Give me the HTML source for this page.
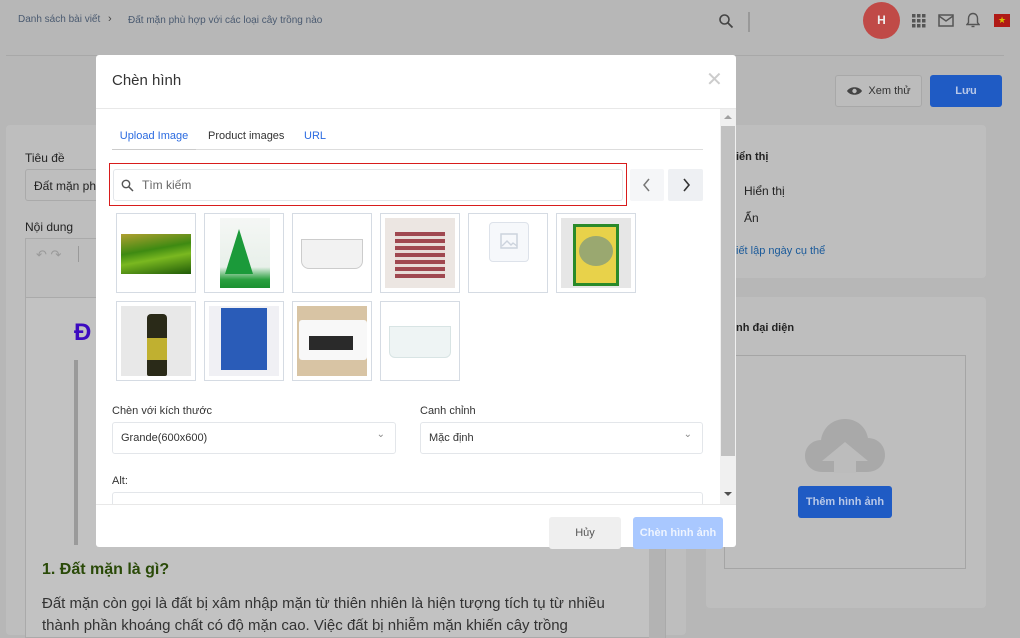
<!DOCTYPE html>
<html><head><meta charset="utf-8"><style>
*{box-sizing:border-box;margin:0;padding:0}
body{width:1020px;height:627px;overflow:hidden;background:#b7b7b7;font-family:"Liberation Sans",sans-serif;position:relative;color:#333}
.a{position:absolute}
.card{position:absolute;background:#bebebe;border-radius:4px}
.tile{position:absolute;width:80px;height:80px;border:1px solid #d5dbe3;background:#fff}
.tile .i{position:absolute;left:4px;top:4px;width:70px;height:70px}
.btn{position:absolute;border-radius:3px;font-size:11px;font-weight:bold;text-align:center;white-space:nowrap}
.sel{position:absolute;height:32px;border:1px solid #e3e6ea;border-radius:3px;font-size:11px;color:#333;padding:9px 8px}
.sel:after{content:"⌄";position:absolute;right:10px;top:6px;color:#888;font-size:10px}
</style></head><body>
<!-- top bar -->
<div class="a" style="left:18px;top:14px;font-size:10px;color:#4a5a70">Danh sách bài viết</div>
<div class="a" style="left:108px;top:13px;font-size:11px;color:#444">›</div>
<div class="a" style="left:128px;top:15px;font-size:10px;color:#4a5a70">Đất mặn phù hợp với các loại cây trồng nào</div>
<svg class="a" style="left:718px;top:13px" width="16" height="16" viewBox="0 0 16 16"><circle cx="6.5" cy="6.5" r="4.5" fill="none" stroke="#444" stroke-width="1.6"/><path d="M10 10l4.5 4.5" stroke="#444" stroke-width="1.8"/></svg>
<div class="a" style="left:748px;top:12px;width:2px;height:20px;background:#999"></div>
<div class="a" style="left:863px;top:2px;width:37px;height:37px;border-radius:50%;background:#c04a47;color:#eee;font-size:12px;font-weight:bold;text-align:center;line-height:37px">H</div>
<svg class="a" style="left:912px;top:14px" width="14" height="14"><g fill="#555"><rect x="0" y="0" width="3.5" height="3.5"/><rect x="5" y="0" width="3.5" height="3.5"/><rect x="10" y="0" width="3.5" height="3.5"/><rect x="0" y="5" width="3.5" height="3.5"/><rect x="5" y="5" width="3.5" height="3.5"/><rect x="10" y="5" width="3.5" height="3.5"/><rect x="0" y="10" width="3.5" height="3.5"/><rect x="5" y="10" width="3.5" height="3.5"/><rect x="10" y="10" width="3.5" height="3.5"/></g></svg>
<svg class="a" style="left:938px;top:14px" width="16" height="13"><rect x="1" y="1" width="14" height="11" fill="none" stroke="#555" stroke-width="1.5"/><path d="M1 2l7 5 7-5" fill="none" stroke="#555" stroke-width="1.4"/></svg>
<svg class="a" style="left:966px;top:12px" width="14" height="17"><path d="M7 1.5c-3 0-4.5 2.5-4.5 5v4L1 12.5h12L11.5 10.5v-4C11.5 4 10 1.5 7 1.5z" fill="none" stroke="#555" stroke-width="1.4"/><path d="M5.5 14.5h3" stroke="#555" stroke-width="1.4"/></svg>
<div class="a" style="left:994px;top:14px;width:16px;height:13px;background:#b01a16;color:#d8c000;font-size:9px;text-align:center;line-height:13px">★</div>
<div class="a" style="left:6px;top:55px;width:998px;height:1px;background:#a8a8a8"></div>
<div class="btn" style="left:835px;top:75px;width:87px;height:32px;border:1px solid #a8a8a8;background:#bcbcbc;color:#333;line-height:30px;padding-left:22px;font-weight:normal">Xem thử</div>
<svg class="a" style="left:846px;top:85px" width="17" height="12"><path d="M1 6C4 1 13 1 16 6 13 11 4 11 1 6z" fill="#444"/><circle cx="8.5" cy="6" r="2.2" fill="#bcbcbc"/></svg>
<div class="btn" style="left:930px;top:75px;width:72px;height:32px;background:#1f5bc4;color:#b8c8e8;line-height:32px">Lưu</div>
<!-- left card -->
<div class="card" style="left:6px;top:125px;width:680px;height:510px"></div>
<div class="a" style="left:25px;top:151px;font-size:12px;color:#222">Tiêu đề</div>
<div class="a" style="left:25px;top:169px;width:200px;height:32px;border:1px solid #aaa;border-radius:3px;font-size:12px;padding:9px 8px;color:#222;white-space:nowrap;overflow:hidden">Đất mặn phù hợp với</div>
<div class="a" style="left:25px;top:220px;font-size:12px;color:#222">Nội dung</div>
<div class="a" style="left:25px;top:238px;width:641px;height:400px;border:1px solid #aaa;background:#c2c2c2"></div>
<div class="a" style="left:26px;top:239px;width:639px;height:59px;border-bottom:1px solid #aaa;background:#bdbdbd"></div>
<div class="a" style="left:36px;top:247px;font-size:13px;color:#999">↶ ↷</div>
<div class="a" style="left:78px;top:246px;width:1px;height:16px;background:#999"></div>
<div class="a" style="left:74px;top:319px;font-size:24px;font-weight:bold;color:#3c0ac0">Đ</div>
<div class="a" style="left:74px;top:360px;width:4px;height:185px;background:#9a9a9a"></div>
<div class="a" style="left:649px;top:298px;width:16px;height:340px;background:#b3b3b3"></div>
<div class="a" style="left:42px;top:561px;font-size:16px;font-weight:bold;color:#2a4a08">1. Đất mặn là gì?</div>
<div class="a" style="left:42px;top:595px;font-size:15px;color:#333;white-space:nowrap">Đất mặn còn gọi là đất bị xâm nhập mặn từ thiên nhiên là hiện tượng tích tụ từ nhiều</div>
<div class="a" style="left:42px;top:617px;font-size:15px;color:#333;white-space:nowrap">thành phần khoáng chất có độ mặn cao. Việc đất bị nhiễm mặn khiến cây trồng</div>
<!-- right cards -->
<div class="card" style="left:706px;top:125px;width:280px;height:153px"></div>
<div class="a" style="left:736px;top:151px;font-size:11px;font-weight:bold;color:#222">iển thị</div>
<div class="a" style="left:744px;top:184px;font-size:12px;color:#222">Hiển thị</div>
<div class="a" style="left:744px;top:211px;font-size:12px;color:#222">Ẩn</div>
<div class="a" style="left:736px;top:245px;font-size:11px;color:#1a5a9a">iết lập ngày cụ thể</div>
<div class="card" style="left:706px;top:297px;width:280px;height:311px"></div>
<div class="a" style="left:736px;top:322px;font-size:11px;font-weight:bold;color:#222">nh đại diện</div>
<div class="a" style="left:724px;top:355px;width:242px;height:214px;border:1px solid #a5a5a5"></div>
<svg class="a" style="left:804px;top:418px" width="82" height="55" viewBox="0 0 82 55"><path d="M18 54C8 54 1 47 1 38c0-9 7-16 16-16 2-13 12-21 24-21 12 0 21 8 23 19 9 0 17 7 17 17 0 10-8 17-18 17z" fill="#a9a9a9"/><path d="M41 24L18 43h12v12h22V43h12z" fill="#bcbcbc"/></svg>
<div class="btn" style="left:798px;top:486px;width:94px;height:32px;background:#1f5bc4;color:#b8c8e8;line-height:32px">Thêm hình ảnh</div>
<!-- modal -->
<div class="a" style="left:96px;top:55px;width:640px;height:492px;background:#fff;border-radius:3px"></div>
<div class="a" style="left:112px;top:72px;font-size:15px;color:#333">Chèn hình</div>
<div class="a" style="left:706px;top:67px;font-size:20px;color:#ccc;font-weight:lighter">✕</div>
<div class="a" style="left:96px;top:108px;width:640px;height:1px;background:#e8e8e8"></div>
<!-- scrollbar -->
<div class="a" style="left:720px;top:109px;width:16px;height:395px;background:#f0f0f0"></div>
<div class="a" style="left:721px;top:126px;width:14px;height:330px;background:#c1c1c1"></div>
<div class="a" style="left:724px;top:115px;width:0;height:0;border-left:4px solid transparent;border-right:4px solid transparent;border-bottom:4px solid #a0a0a0"></div>
<div class="a" style="left:724px;top:492px;width:0;height:0;border-left:4px solid transparent;border-right:4px solid transparent;border-top:4px solid #505050"></div>
<!-- tabs -->
<div class="a" style="left:112px;top:149px;width:591px;height:1px;background:#ddd"></div>
<div class="a" style="left:112px;top:130px;width:84px;height:20px;border-bottom:1px solid #ccc;text-align:center;font-size:11px;color:#2a6ae0">Upload Image</div>
<div class="a" style="left:208px;top:130px;font-size:11px;color:#333">Product images</div>
<div class="a" style="left:304px;top:130px;font-size:11px;color:#2a6ae0">URL</div>
<!-- search -->
<div class="a" style="left:109px;top:163px;width:518px;height:43px;border:1px solid #d81c1c"></div>
<div class="a" style="left:113px;top:169px;width:510px;height:32px;border:1px solid #e3e6ea;border-radius:3px"></div>
<svg class="a" style="left:121px;top:179px" width="13" height="13"><circle cx="5" cy="5" r="3.7" fill="none" stroke="#555" stroke-width="1.4"/><path d="M7.8 7.8L12 12" stroke="#555" stroke-width="1.5"/></svg>
<div class="a" style="left:142px;top:178px;font-size:12px;color:#666">Tìm kiếm</div>
<div class="a" style="left:630px;top:169px;width:34px;height:32px;background:#f5f6f8;border-radius:2px"></div>
<div class="a" style="left:668px;top:169px;width:35px;height:32px;background:#eef0f3;border-radius:2px"></div>
<svg class="a" style="left:641px;top:177px" width="12" height="16"><path d="M8 2L3 8l5 6" fill="none" stroke="#777" stroke-width="1.5"/></svg>
<svg class="a" style="left:680px;top:177px" width="12" height="16"><path d="M4 2l5 6-5 6" fill="none" stroke="#333" stroke-width="1.6"/></svg>
<!-- tiles -->
<div class="tile" style="left:116px;top:213px"><div class="i" style="top:20px;height:40px;background:linear-gradient(170deg,#b0a030 0%,#3e8a12 40%,#7ab820 60%,#1f5a08 100%)"></div></div>
<div class="tile" style="left:204px;top:213px"><div class="i" style="left:15px;width:50px;background:linear-gradient(180deg,#f5f7f5 0%,#e8f0ea 70%,#2aa040 88%,#1a9030 100%)"></div><div class="a" style="left:20px;top:15px;width:0;height:0;border-left:14px solid transparent;border-right:14px solid transparent;border-bottom:45px solid #1b9a3a"></div></div>
<div class="tile" style="left:292px;top:213px"><div class="a" style="left:8px;top:25px;width:62px;height:30px;background:#f2f2f2;border:1px solid #ccc;border-radius:0 0 8px 8px"></div></div>
<div class="tile" style="left:380px;top:213px"><div class="i" style="background:#ece6e2"></div><div class="a" style="left:14px;top:18px;width:50px;height:46px;background:repeating-linear-gradient(180deg,#a04850 0 4px,#e8dcd8 4px 7px)"></div></div>
<div class="tile" style="left:468px;top:213px"><div class="a" style="left:20px;top:8px;width:40px;height:40px;border:1px solid #dde2ea;border-radius:4px;background:#f6f8fb"></div><svg class="a" style="left:31px;top:19px" width="18" height="16"><rect x="1" y="1" width="16" height="14" fill="none" stroke="#ccd3dd" stroke-width="1.5"/><path d="M2 13l5-5 4 4 2-2 4 3" fill="none" stroke="#ccd3dd" stroke-width="1.4"/></svg></div>
<div class="tile" style="left:556px;top:213px"><div class="i" style="background:#e6e6e6"></div><div class="a" style="left:16px;top:10px;width:46px;height:62px;background:#e8d24a;border:3px solid #2a8a2a"></div><div class="a" style="left:22px;top:22px;width:34px;height:30px;background:#9aa870;border-radius:50%"></div></div>
<div class="tile" style="left:116px;top:301px"><div class="i" style="background:#e8e8e8"></div><div class="a" style="left:30px;top:12px;width:20px;height:62px;background:#2a2a18;border-radius:4px 4px 2px 2px"></div><div class="a" style="left:30px;top:36px;width:20px;height:22px;background:#c0b030"></div></div>
<div class="tile" style="left:204px;top:301px"><div class="i" style="background:#f0f0f4"></div><div class="a" style="left:16px;top:6px;width:46px;height:62px;background:#2a5cb8"></div></div>
<div class="tile" style="left:292px;top:301px"><div class="i" style="background:#d8c4a4"></div><div class="a" style="left:6px;top:18px;width:68px;height:40px;background:#f8f8f8;border-radius:3px"></div><div class="a" style="left:16px;top:34px;width:44px;height:14px;background:#2a2a2a"></div></div>
<div class="tile" style="left:380px;top:301px"><div class="a" style="left:8px;top:24px;width:62px;height:32px;background:#eef4f4;border:1px solid #d8e4e4;border-radius:0 0 6px 6px"></div></div>
<!-- form -->
<div class="a" style="left:112px;top:405px;font-size:11px;color:#333">Chèn với kích thước</div>
<div class="sel" style="left:112px;top:422px;width:284px">Grande(600x600)</div>
<div class="a" style="left:420px;top:405px;font-size:11px;color:#333">Canh chỉnh</div>
<div class="sel" style="left:420px;top:422px;width:283px">Mặc định</div>
<div class="a" style="left:112px;top:475px;font-size:11px;color:#333">Alt:</div>
<div class="a" style="left:112px;top:492px;width:591px;height:12px;border:1px solid #e3e6ea;border-bottom:none;border-radius:3px 3px 0 0"></div>
<div class="a" style="left:96px;top:504px;width:640px;height:1px;background:#e8e8e8"></div>
<div class="btn" style="left:549px;top:517px;width:72px;height:32px;background:#efefef;color:#555;font-weight:normal;line-height:32px">Hủy</div>
<div class="btn" style="left:633px;top:517px;width:90px;height:32px;background:#a9c8ff;color:#eef4ff;line-height:32px">Chèn hình ảnh</div>
</body></html>
